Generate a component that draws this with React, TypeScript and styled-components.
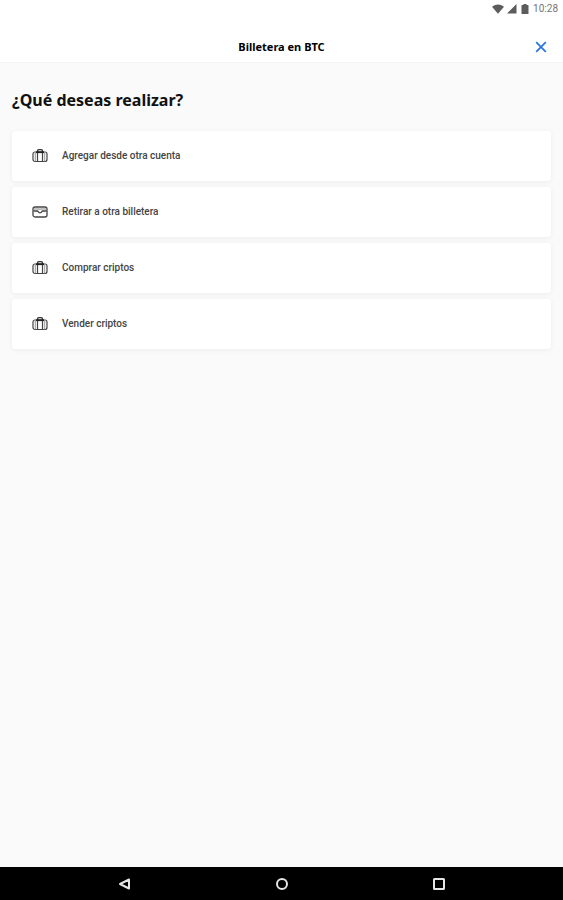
import React from 'react';
import styled, { createGlobalStyle } from 'styled-components';

const GlobalStyle = createGlobalStyle`
  *, *::before, *::after { box-sizing: border-box; }
  body {
    margin: 0;
    background: #fafafa;
    color: #111;
    font-family: "Noto Sans", "Open Sans", sans-serif;
  }
`;

const Screen = styled.div`
  display: flex;
  flex-direction: column;
  min-height: 100vh;
`;

const StatusBar = styled.div`
  display: flex;
  align-items: center;
  justify-content: flex-end;
  gap: 3px;
  height: 18px;
  padding: 0 5px;
  background: #fff;
  color: #757575;
  font: 10px/18px Roboto, sans-serif;
`;

const StatusIcon = styled.svg`
  display: block;
  height: 10px;
  fill: #5c5c5c;
`;

const Header = styled.header`
  display: grid;
  grid-template-columns: 1fr auto 1fr;
  align-items: center;
  height: 45px;
  padding: 14px 12px 0;
  background: #fff;
  border-bottom: 1px solid #f5f5f5;
`;

const HeaderTitle = styled.h1`
  grid-column: 2;
  margin: 0;
  font-size: 11px;
  line-height: 16px;
  font-weight: 700;
  color: #000;
`;

const CloseButton = styled.button`
  justify-self: end;
  display: flex;
  padding: 4px;
  border: 0;
  background: none;
  cursor: pointer;
`;

const Main = styled.main`
  flex: 1;
  padding: 25px 12px;
`;

const Question = styled.h2`
  margin: 0 0 19px;
  font-size: 16px;
  line-height: 24px;
  font-weight: 700;
  color: #111;
`;

const ActionList = styled.ul`
  display: grid;
  gap: 6px;
  margin: 0;
  padding: 0;
  list-style: none;
`;

const ActionButton = styled.button`
  display: flex;
  align-items: center;
  gap: 14px;
  width: 100%;
  height: 50px;
  padding: 0 20px;
  border: 0;
  border-radius: 3px;
  background: #fff;
  box-shadow: 0 1px 5px rgba(0, 0, 0, 0.06);
  color: #444;
  font: 500 10px/14px Roboto, "Noto Sans", sans-serif;
  text-align: left;
  cursor: pointer;
`;

const NavBar = styled.nav`
  display: grid;
  grid-template-columns: repeat(3, 28%);
  justify-content: center;
  align-items: center;
  height: 33px;
  background: #000;
`;

const NavButton = styled.button`
  justify-self: center;
  display: flex;
  padding: 4px;
  border: 0;
  background: none;
  cursor: pointer;
`;

const NavIcon = styled.svg`
  fill: none;
  stroke: #e6e6e6;
  stroke-width: 2;
  stroke-linejoin: round;
`;

const Suitcase = () => (
  <svg width="16" height="16" viewBox="0 0 16 16" fill="none" stroke="#444" strokeWidth="1.2" aria-hidden="true">
    <rect x="1" y="4" width="14" height="9.5" rx="2" />
    <path d="M5.5 4V3Q5.5 1.6 6.8 1.6H9.2Q10.5 1.6 10.5 3V4" stroke="#333" strokeWidth="1.4" />
    <path d="M5.5 4V13.5M10.5 4V13.5" />
    <path d="M3.3 4V13.5M12.7 4V13.5" stroke="#999" strokeWidth="1" />
    <path d="M4 4.2H12" stroke="#222" strokeWidth="1.8" />
  </svg>
);

const Wallet = () => (
  <svg width="16" height="16" viewBox="0 0 16 16" fill="none" stroke="#444" strokeWidth="1.3" aria-hidden="true">
    <rect x="1" y="3" width="14" height="10" rx="2" />
    <path d="M1.5 5H14.5" stroke="#888" strokeWidth="1" />
    <path d="M1.5 7H5.2Q6 7 6.3 7.8Q6.7 8.8 8 8.8T9.7 7.8Q10 7 10.8 7H14.5" />
  </svg>
);

const actions = [
  { label: 'Agregar desde otra cuenta', Icon: Suitcase },
  { label: 'Retirar a otra billetera', Icon: Wallet },
  { label: 'Comprar criptos', Icon: Suitcase },
  { label: 'Vender criptos', Icon: Suitcase },
];

export default function App() {
  return (
    <Screen>
      <GlobalStyle />
      <StatusBar>
        <StatusIcon width="12" viewBox="0 0 12 10" aria-hidden="true">
          <path d="M0 2.8Q6-1.8 12 2.8L6 9.8Z" />
        </StatusIcon>
        <StatusIcon width="10" viewBox="0 0 10 10" aria-hidden="true">
          <path d="M0 9.5L9.5 0V9.5Z" />
        </StatusIcon>
        <StatusIcon width="10" viewBox="0 0 10 10" aria-hidden="true">
          <path d="M3.5 0H6.5V1H8Q8.5 1 8.5 1.6V9.4Q8.5 10 8 10H2Q1.5 10 1.5 9.4V1.6Q1.5 1 2 1H3.5Z" />
        </StatusIcon>
        <time>10:28</time>
      </StatusBar>
      <Header>
        <HeaderTitle>Billetera en BTC</HeaderTitle>
        <CloseButton type="button" aria-label="Cerrar">
          <svg width="12" height="12" viewBox="0 0 12 12" stroke="#2f75e0" strokeWidth="1.8" aria-hidden="true">
            <path d="M1.2 1.2L10.8 10.8M10.8 1.2L1.2 10.8" />
          </svg>
        </CloseButton>
      </Header>
      <Main>
        <Question>¿Qué deseas realizar?</Question>
        <ActionList>
          {actions.map(({ label, Icon }) => (
            <li key={label}>
              <ActionButton type="button">
                <Icon />
                {label}
              </ActionButton>
            </li>
          ))}
        </ActionList>
      </Main>
      <NavBar aria-label="Sistema">
        <NavButton type="button" aria-label="Atrás">
          <NavIcon width="14" height="14" viewBox="0 0 14 14">
            <path d="M12 2.5V11.5L3 7Z" />
          </NavIcon>
        </NavButton>
        <NavButton type="button" aria-label="Inicio">
          <NavIcon width="14" height="14" viewBox="0 0 14 14">
            <circle cx="7" cy="7" r="5" />
          </NavIcon>
        </NavButton>
        <NavButton type="button" aria-label="Recientes">
          <NavIcon width="14" height="14" viewBox="0 0 14 14">
            <rect x="2" y="2" width="10" height="10" rx="0.5" />
          </NavIcon>
        </NavButton>
      </NavBar>
    </Screen>
  );
}
